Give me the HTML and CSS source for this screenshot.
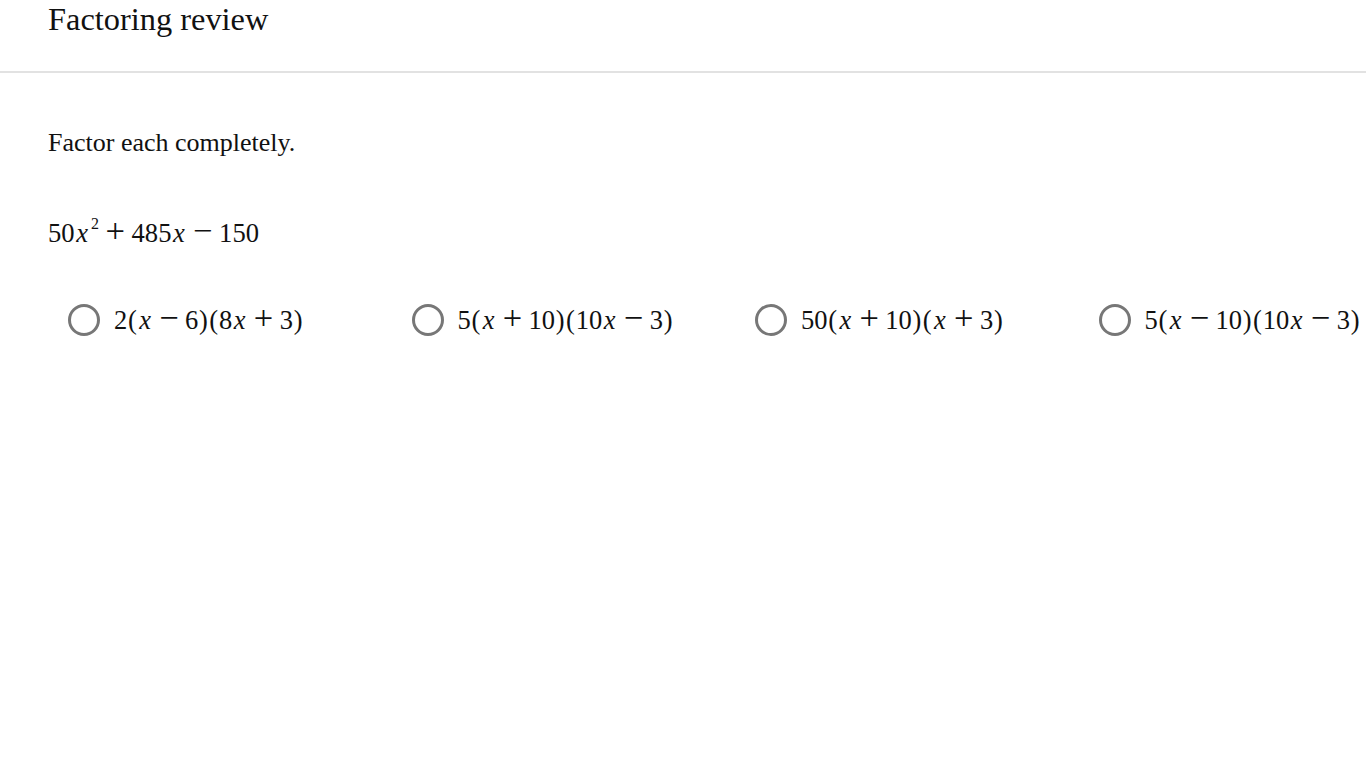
FILE: index.html
```html
<!DOCTYPE html>
<html>
<head>
<meta charset="utf-8">
<link rel="stylesheet" href="styles.css">
</head>
<body>
<header class="top">
  <h1 class="title">Factoring review</h1>
</header>
<main class="content">
  <p class="prompt">Factor each completely.</p>
  <p class="expr"><span class="m">50<i class="v">x</i><sup>2</sup><span class="bin">+</span>485<i class="v">x</i><span class="bin">−</span>150</span></p>
  <div class="choices">
    <label class="choice"><span class="radio"></span><span class="m">2<span class="p">(</span><i class="v">x</i><span class="bin">−</span>6<span class="p">)</span><span class="p">(</span>8<i class="v">x</i><span class="bin">+</span>3<span class="p">)</span></span></label>
    <label class="choice"><span class="radio"></span><span class="m">5<span class="p">(</span><i class="v">x</i><span class="bin">+</span>10<span class="p">)</span><span class="p">(</span>10<i class="v">x</i><span class="bin">−</span>3<span class="p">)</span></span></label>
    <label class="choice"><span class="radio"></span><span class="m">50<span class="p">(</span><i class="v">x</i><span class="bin">+</span>10<span class="p">)</span><span class="p">(</span><i class="v">x</i><span class="bin">+</span>3<span class="p">)</span></span></label>
    <label class="choice"><span class="radio"></span><span class="m">5<span class="p">(</span><i class="v">x</i><span class="bin">−</span>10<span class="p">)</span><span class="p">(</span>10<i class="v">x</i><span class="bin">−</span>3<span class="p">)</span></span></label>
  </div>
</main>
</body>
</html>
```
FILE: styles.css
```css
html, body {
  margin: 0;
  padding: 0;
  background: #fff;
  color: #111;
  font-family: "Liberation Serif", "Times New Roman", serif;
}
body { overflow: hidden; width: 1366px; height: 768px; }
.top {
  height: 71px;
  border-bottom: 2px solid #e2e2e2;
  padding-left: 48px;
}
.title {
  margin: 0;
  font-weight: normal;
  font-size: 32.4px;
  line-height: 38px;
}
.content { padding: 52px 48px 0 48px; }
.prompt {
  margin: 0;
  font-size: 26px;
  line-height: 36px;
}
.expr {
  margin: 54px 0 0 0;
  font-size: 26.6px;
  line-height: 36px;
}
.m { white-space: nowrap; }
.v {
  font-style: italic;
  display: inline-block;
  width: 0.572em;
  text-align: center;
}
.p {
  display: inline-block;
  width: 0.389em;
  text-align: center;
}
.bin {
  display: inline-block;
  font-size: 1.3em;
  line-height: 20px;
  width: 0.598em;
  margin: 0 0.171em;
  text-align: center;
}
.m sup {
  font-size: 0.6em;
  vertical-align: 0.8em;
  line-height: 0;
  margin-left: 0.08em;
}
.choices {
  display: flex;
  margin-top: 51px;
  width: 1374px;
}
.choice {
  flex: 0 0 343.5px;
  display: flex;
  align-items: center;
  gap: 14px;
  padding-left: 20px;
  box-sizing: border-box;
  font-size: 26.5px;
  line-height: 36px;
}
.radio {
  width: 26px;
  height: 26px;
  border: 3px solid #777;
  border-radius: 50%;
  flex: 0 0 auto;
}
```
